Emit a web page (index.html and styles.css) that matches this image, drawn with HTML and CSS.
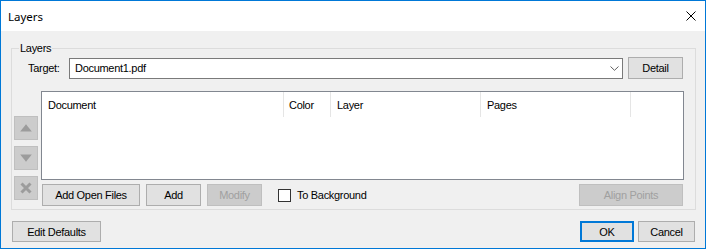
FILE: index.html
```html
<!DOCTYPE html>
<html>
<head>
<meta charset="utf-8">
<link rel="stylesheet" href="styles.css">
</head>
<body>
<div class="win">
  <div class="titlebar">
    <span class="title">Layers</span>
    <svg class="close" width="10" height="10" viewBox="0 0 10 10"><path d="M0.5 0.5L9.5 9.5M9.5 0.5L0.5 9.5" stroke="#000" stroke-width="1" fill="none"/></svg>
  </div>
  <div class="body">
    <div class="group">
      <span class="legend">Layers</span>
      <div class="target-row">
        <span class="target-label">Target:</span>
        <div class="combo">
          <span>Document1.pdf</span>
          <svg width="9" height="5" viewBox="0 0 9 5"><path d="M0.5 0.5L4.5 4.3L8.5 0.5" stroke="#606060" stroke-width="1" fill="none"/></svg>
        </div>
        <div class="btn detail">Detail</div>
      </div>
      <div class="main">
        <div class="side">
          <div class="sbtn"><svg width="12" height="8" viewBox="0 0 12 8"><path d="M6 0.3L11.8 7.5H0.2Z" fill="#9c9c9c"/></svg></div>
          <div class="sbtn"><svg width="12" height="8" viewBox="0 0 12 8"><path d="M0.2 0.5H11.8L6 7.7Z" fill="#9c9c9c"/></svg></div>
          <div class="sbtn"><svg width="12" height="12" viewBox="0 0 12 12"><path d="M1.5 1.5L10.5 10.5M10.5 1.5L1.5 10.5" stroke="#9c9c9c" stroke-width="3" fill="none"/></svg></div>
        </div>
        <div class="right">
          <div class="list">
            <div class="lhead">
              <div class="col c1">Document</div>
              <div class="col c2">Color</div>
              <div class="col c3">Layer</div>
              <div class="col c4">Pages</div>
            </div>
          </div>
          <div class="btnrow">
            <div class="btn b-open">Add Open Files</div>
            <div class="btn b-add">Add</div>
            <div class="btn b-mod disabled">Modify</div>
            <span class="check"></span>
            <span class="check-label">To Background</span>
            <div class="btn b-align disabled">Align Points</div>
          </div>
        </div>
      </div>
    </div>
    <div class="footer">
      <div class="btn b-edit">Edit Defaults</div>
      <div class="btn b-ok">OK</div>
      <div class="btn b-cancel">Cancel</div>
    </div>
  </div>
</div>
</body>
</html>
```
FILE: styles.css
```css
* { box-sizing: border-box; }
body {
  margin: 0;
  font-family: "Liberation Sans", Arial, sans-serif;
  font-size: 11px;
  letter-spacing: -0.3px;
  color: #000;
}
.win {
  width: 706px;
  height: 249px;
  border: 1px solid #0078d7;
  background: #f0f0f0;
  display: flex;
  flex-direction: column;
}
.titlebar {
  height: 30px;
  flex: none;
  background: #fff;
  display: flex;
  align-items: center;
  justify-content: space-between;
  padding: 0 9px 0 7px;
}
.title {
  font-family: "Noto Sans", "Open Sans", sans-serif;
  font-size: 11.5px;
  letter-spacing: 0;
}
.close { display: block; }
.body {
  flex: 1;
  padding: 17px 9px 0 10px;
  display: flex;
  flex-direction: column;
}
.group {
  position: relative;
  border: 1px solid #dcdcdc;
  padding: 8px 11px 3px 2px;
}
.legend {
  position: absolute;
  left: 7px;
  top: -7px;
  padding: 0 1px;
  line-height: 13px;
  background: #f0f0f0;
}
.target-row {
  display: flex;
  align-items: center;
  height: 22px;
  padding-left: 14px;
}
.target-label { width: 41px; }
.combo {
  width: 554px;
  height: 21px;
  border: 1px solid #7a7a7a;
  background: #fff;
  display: flex;
  align-items: center;
  justify-content: space-between;
  padding: 0 3px 0 5px;
}
.combo svg { display: block; }
.btn {
  height: 22px;
  background: #e1e1e1;
  border: 1px solid #adadad;
  display: flex;
  align-items: center;
  justify-content: center;
  flex: none;
}
.btn.disabled {
  background: #cccccc;
  border-color: #bfbfbf;
  color: #a0a0a0;
}
.detail { width: 55px; margin-left: 5px; }
.main {
  display: flex;
  gap: 3px;
  margin-top: 12px;
}
.side {
  display: flex;
  flex-direction: column;
  gap: 6px;
  padding-top: 25px;
  width: 24px;
  flex: none;
}
.sbtn {
  width: 24px;
  height: 24px;
  background: #cccccc;
  border: 1px solid #bfbfbf;
  display: flex;
  align-items: center;
  justify-content: center;
}
.sbtn svg { display: block; }
.right {
  flex: 1;
  display: flex;
  flex-direction: column;
}
.list {
  height: 89px;
  border: 1px solid #828790;
  background: #fff;
}
.lhead {
  display: flex;
  height: 25px;
}
.col {
  border-right: 1px solid #e5e5e5;
  padding-left: 6px;
  display: flex;
  align-items: center;
}
.c1 { width: 242px; }
.c2 { width: 47px; padding-left: 5px; }
.c3 { width: 150px; }
.c4 { width: 150px; }
.btnrow {
  display: flex;
  align-items: center;
  height: 22px;
  margin-top: 4px;
  padding-left: 1px;
}
.b-open { width: 98px; }
.b-add { width: 55px; margin-left: 6px; }
.b-mod { width: 55px; margin-left: 6px; }
.check {
  width: 13px;
  height: 13px;
  border: 1px solid #333;
  background: #fff;
  margin-left: 16px;
  flex: none;
}
.check-label { margin-left: 6px; }
.b-align { width: 104px; margin-left: auto; margin-right: 1px; }
.footer {
  display: flex;
  margin-top: 11px;
}
.footer .btn { height: 21px; }
.b-edit { width: 89px; margin-left: 1px; }
.b-ok { width: 54px; margin-left: auto; border: 2px solid #0078d7; }
.b-cancel { width: 57px; margin-left: 4px; margin-right: 1px; }
```
